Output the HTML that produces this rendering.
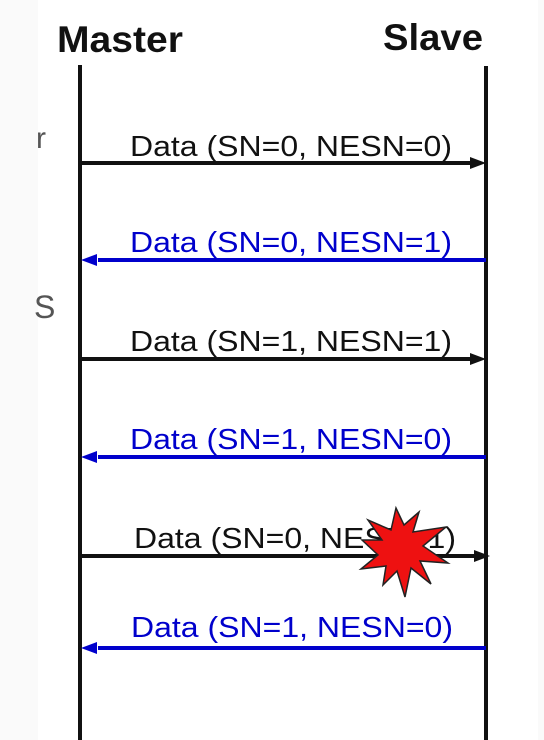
<!DOCTYPE html>
<html><head><style>
html,body{margin:0;padding:0;background:#fff;}
svg{display:block;}
</style></head><body>
<svg width="544" height="740" viewBox="0 0 544 740" xmlns="http://www.w3.org/2000/svg" font-family="Liberation Sans, Arial, sans-serif">
<rect x="0" y="0" width="544" height="740" fill="#fff"/>
<rect x="0" y="0" width="38" height="740" fill="#fafafa"/>
<rect x="538" y="0" width="6" height="740" fill="#fafafa"/>
<text x="57" y="52" font-size="37" font-weight="bold" fill="#111" textLength="126" lengthAdjust="spacingAndGlyphs">Master</text>
<text x="383" y="50" font-size="37" font-weight="bold" fill="#111" textLength="100" lengthAdjust="spacingAndGlyphs">Slave</text>
<text x="36" y="148" font-size="30" fill="#555">r</text>
<text x="34" y="318" font-size="32" fill="#555">S</text>
<rect x="78" y="65" width="4" height="675" fill="#111"/>
<rect x="484" y="66" width="4" height="674" fill="#111"/>
<g font-size="29">
<text x="130" y="156" fill="#111" textLength="322" lengthAdjust="spacingAndGlyphs">Data (SN=0, NESN=0)</text>
<text x="130" y="252" fill="#0000cc" textLength="322" lengthAdjust="spacingAndGlyphs">Data (SN=0, NESN=1)</text>
<text x="130" y="351" fill="#111" textLength="322" lengthAdjust="spacingAndGlyphs">Data (SN=1, NESN=1)</text>
<text x="130" y="449" fill="#0000cc" textLength="322" lengthAdjust="spacingAndGlyphs">Data (SN=1, NESN=0)</text>
<text x="134" y="548" fill="#111" textLength="322" lengthAdjust="spacingAndGlyphs">Data (SN=0, NESN=1)</text>
<text x="131" y="637" fill="#0000cc" textLength="322" lengthAdjust="spacingAndGlyphs">Data (SN=1, NESN=0)</text>
</g>
<g stroke-width="4">
<line x1="80" y1="163" x2="472" y2="163" stroke="#111"/>
<polygon points="486,163 470,157 470,169" fill="#111"/>
<line x1="98" y1="260" x2="486" y2="260" stroke="#0000cc"/>
<polygon points="81,260 97,254 97,266" fill="#0000cc"/>
<line x1="80" y1="359" x2="472" y2="359" stroke="#111"/>
<polygon points="486,359 470,353 470,365" fill="#111"/>
<line x1="98" y1="457" x2="486" y2="457" stroke="#0000cc"/>
<polygon points="81,457 97,451 97,463" fill="#0000cc"/>
<line x1="80" y1="556" x2="476" y2="556" stroke="#111"/>
<polygon points="490,556 474,550 474,562" fill="#111"/>
<line x1="98" y1="648" x2="486" y2="648" stroke="#0000cc"/>
<polygon points="81,648 97,642 97,654" fill="#0000cc"/>
</g>
<polygon fill="#ee1111" stroke="#222" stroke-width="1.5" points="
419,512 413,532 446,527 423,546 448,563 420,561 431,584 411,568 405,597 397,571 383,585 386,566 361,569 378,555 362,540 382,540 368,520 391,530 396,508 404,525"/>
</svg>
</body></html>
